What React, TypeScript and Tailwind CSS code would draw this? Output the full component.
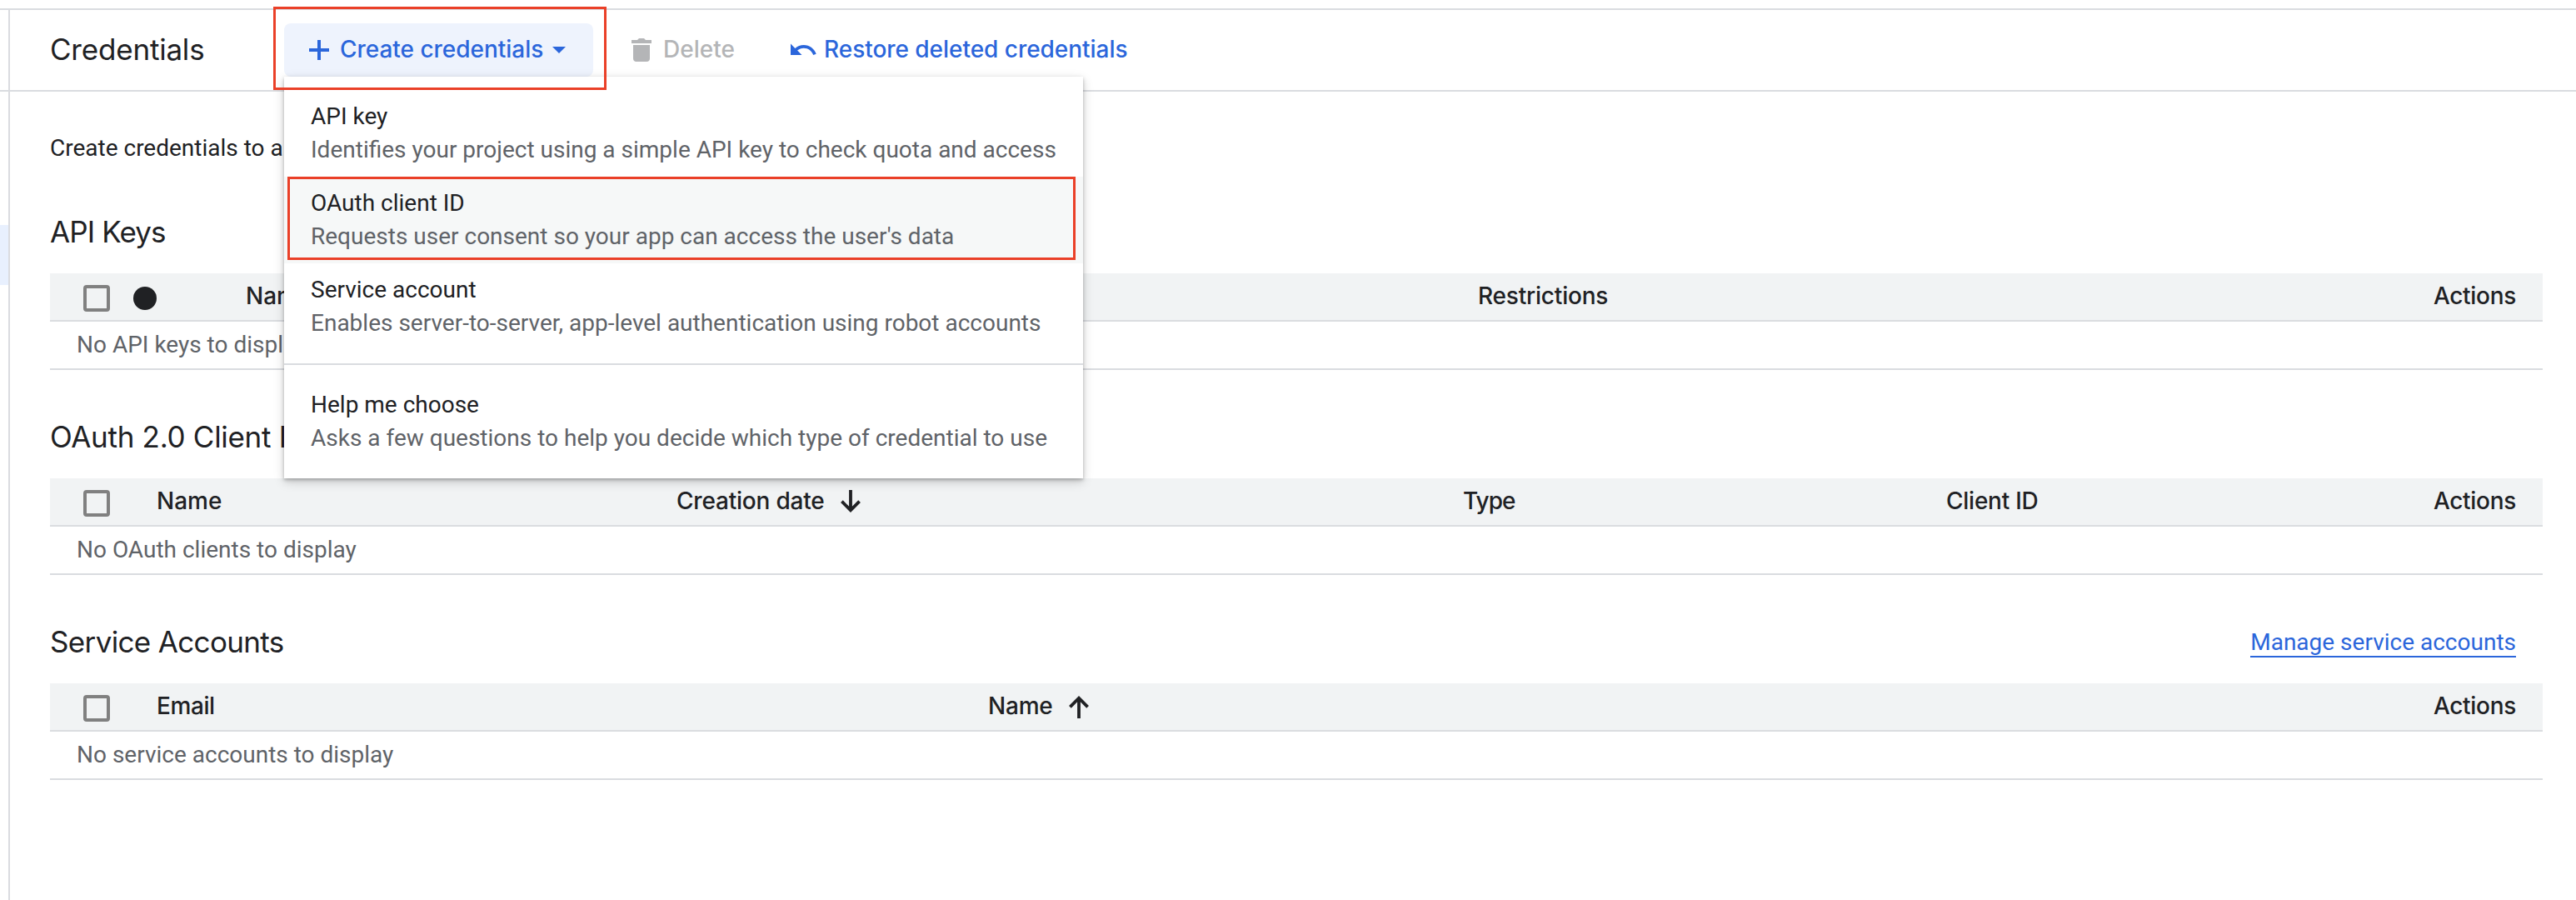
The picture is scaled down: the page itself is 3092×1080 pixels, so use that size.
import React from 'react';

const MENU_ITEMS = [
  { title: 'API key', text: 'Identifies your project using a simple API key to check quota and access' },
  { title: 'OAuth client ID', text: "Requests user consent so your app can access the user's data", active: true },
  { title: 'Service account', text: 'Enables server-to-server, app-level authentication using robot accounts' },
];

function PlusIcon() {
  return (
    <svg className="size-9 shrink-0" viewBox="0 0 36 36" fill="currentColor">
      <path d="M16 6h4v10h10v4H20v10h-4V20H6v-4h10z" />
    </svg>
  );
}

function TrashIcon() {
  return (
    <svg className="size-9 shrink-0" viewBox="0 0 36 36" fill="currentColor">
      <path d="M6 6h7l2-2h6l2 2h7v4H6zM8 12h20v16a4 4 0 0 1-4 4H12a4 4 0 0 1-4-4z" />
    </svg>
  );
}

function UndoIcon() {
  return (
    <svg className="size-9 shrink-0" viewBox="0 0 24 24" fill="currentColor">
      <path d="M12.5 8c-2.65 0-5.05.99-6.9 2.6L2 7v9h9l-3.62-3.62c1.39-1.16 3.16-1.88 5.12-1.88 3.54 0 6.55 2.31 7.6 5.5l2.37-.78C21.08 11.03 17.15 8 12.5 8z" />
    </svg>
  );
}

function SortArrow({ up = false }: { up?: boolean }) {
  return (
    <svg
      className={up ? 'h-7 w-6 shrink-0 rotate-180' : 'h-7 w-6 shrink-0'}
      viewBox="0 0 24 28"
      fill="none"
      stroke="currentColor"
      strokeWidth="3.8"
    >
      <path d="M12 0v24M1.4 13.6 12 24.4l10.6-10.8" />
    </svg>
  );
}

function Checkbox() {
  return <span className="mt-1 ml-10 block size-8 shrink-0 rounded-[4px] border-4 border-[#808080]" />;
}

function HeaderText({ children, className = '' }: { children: React.ReactNode; className?: string }) {
  return <span className={`block pb-[2px] leading-[54px] ${className}`}>{children}</span>;
}

function HeaderRow({ cols, children }: { cols: string; children: React.ReactNode }) {
  return (
    <div
      className={`grid h-[58px] items-center border-b-2 border-[#dadce0] bg-[#f1f3f4] font-['Inter',sans-serif] text-[28px] font-medium whitespace-nowrap ${cols}`}
    >
      {children}
    </div>
  );
}

function Section({
  title,
  titleClass,
  link,
  empty,
  children,
}: {
  title: string;
  titleClass: string;
  link?: string;
  empty: string;
  children: React.ReactNode;
}) {
  return (
    <section className="mr-10 ml-12">
      <div className="flex h-[130px] items-start justify-between">
        <h2 className={`pt-[55px] font-['Inter',sans-serif] text-[35px] leading-[50px] ${titleClass}`}>{title}</h2>
        {link && (
          <a className="mt-16 mr-8 border-b-2 border-[#2b66db] text-[28px] leading-[33px] text-[#2b66db]">{link}</a>
        )}
      </div>
      {children}
      <div className="h-[58px] border-b-2 border-[#dadce0] pl-8 leading-[55px] text-[#5f6368]">{empty}</div>
    </section>
  );
}

function MenuItem({ title, text, active }: { title: string; text: string; active?: boolean }) {
  return (
    <div className={active ? 'bg-[#f6f8f8] px-8 py-3' : 'px-8 py-3'}>
      <div className="leading-10">{title}</div>
      <div className="leading-10 text-[#5f6368]">{text}</div>
    </div>
  );
}

function CredentialsMenu() {
  return (
    <div className="absolute top-[92px] left-[341px] z-10 w-[959px] bg-white py-4 whitespace-nowrap shadow-[0_2px_4px_rgba(0,0,0,0.25),0_4px_12px_rgba(0,0,0,0.18)]">
      {MENU_ITEMS.map((item) => (
        <MenuItem key={item.title} {...item} />
      ))}
      <div className="my-4 h-0.5 bg-[#dadce0]" />
      <MenuItem title="Help me choose" text="Asks a few questions to help you decide which type of credential to use" />
      <div className="absolute top-[120px] left-1 h-[100px] w-[946px] border-[3px] border-[#ea4028]" />
    </div>
  );
}

export default function App() {
  return (
    <div className="relative h-[1080px] w-[3092px] overflow-hidden bg-white pt-2.5 font-['Roboto',sans-serif] text-[28px] text-[#202124]">
      <div className="flex h-full border-t-2 border-[#dadce0]">
        <aside className="w-3 shrink-0 border-r-2 border-[#dadce0]">
          <div className="h-[98px] border-b-2 border-[#dadce0]" />
          <div className="mt-40 h-[72px] bg-[#e8f0fe]" />
        </aside>

        <main className="min-w-0 flex-1">
          <header className="flex h-[98px] items-center border-b-2 border-[#dadce0] pl-12 font-['Inter',sans-serif] whitespace-nowrap">
            <h1 className="w-[281px] pb-[2px] text-[35px] tracking-[-0.2px]">Credentials</h1>
            <button className="flex h-16 w-[371px] items-center rounded-lg bg-[#eef3fd] pl-6 font-medium text-[#2b66db]">
              <PlusIcon />
              <span className="ml-[7px] w-[246px] pb-[2px] text-left tracking-[-0.03px]">Create credentials</span>
              <svg className="ml-[9px] h-2 w-4" viewBox="0 0 16 8" fill="currentColor">
                <path d="M0 0h16L8 8z" />
              </svg>
            </button>
            <button className="ml-10 flex items-center font-medium text-[#b4b5b7]">
              <TrashIcon />
              <span className="ml-2 w-[150px] pb-[2px] text-left">Delete</span>
            </button>
            <button className="flex items-center font-medium text-[#2b66db]">
              <UndoIcon />
              <span className="ml-[7px] pb-[2px] tracking-[-0.04px]">Restore deleted credentials</span>
            </button>
          </header>

          <p className="ml-12 h-[88px] pt-12 leading-[39px] whitespace-nowrap">Create credentials to a</p>

          <Section title="API Keys" titleClass="tracking-[-0.9px]" empty="No API keys to display">
            <HeaderRow cols="grid-cols-[100px_135px_1479px_1fr_auto]">
              <Checkbox />
              <span className="mt-1 block size-7 rounded-full bg-[#202124]" />
              <HeaderText>Name</HeaderText>
              <HeaderText className="tracking-[-0.2px]">Restrictions</HeaderText>
              <HeaderText className="pr-8 tracking-[-0.3px]">Actions</HeaderText>
            </HeaderRow>
          </Section>

          <Section title="OAuth 2.0 Client IDs" titleClass="tracking-[-0.3px]" empty="No OAuth clients to display">
            <HeaderRow cols="grid-cols-[128px_624px_944px_580px_1fr_auto]">
              <Checkbox />
              <HeaderText>Name</HeaderText>
              <div className="flex items-center">
                <HeaderText className="w-[197px] tracking-[-0.2px]">Creation date</HeaderText>
                <SortArrow />
              </div>
              <HeaderText className="tracking-[-1px]">Type</HeaderText>
              <HeaderText className="tracking-[-0.25px]">Client ID</HeaderText>
              <HeaderText className="pr-8 tracking-[-0.3px]">Actions</HeaderText>
            </HeaderRow>
          </Section>

          <Section
            title="Service Accounts"
            titleClass="tracking-[-0.65px]"
            link="Manage service accounts"
            empty="No service accounts to display"
          >
            <HeaderRow cols="grid-cols-[128px_998px_1fr_auto]">
              <Checkbox />
              <HeaderText className="tracking-[-0.4px]">Email</HeaderText>
              <div className="flex items-center">
                <HeaderText className="w-[97px] tracking-[-0.2px]">Name</HeaderText>
                <SortArrow up />
              </div>
              <HeaderText className="pr-8 tracking-[-0.3px]">Actions</HeaderText>
            </HeaderRow>
          </Section>
        </main>
      </div>

      <CredentialsMenu />
      <div className="absolute top-2 left-[328px] z-20 h-[100px] w-[400px] border-[3px] border-[#ea4028]" />
    </div>
  );
}
